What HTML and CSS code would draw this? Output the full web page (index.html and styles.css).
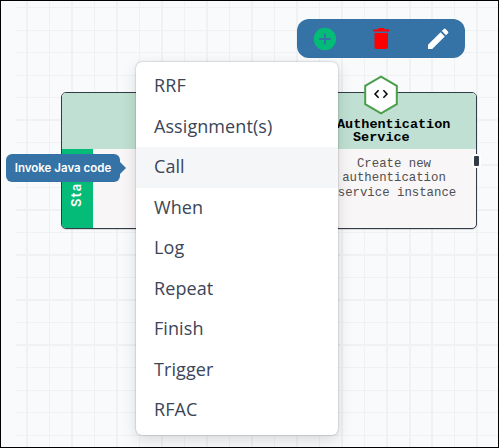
FILE: index.html
```html
<!DOCTYPE html>
<html lang="en">
<head>
<meta charset="utf-8">
<title>Flow editor</title>
<link rel="stylesheet" href="styles.css">
</head>
<body>
<main class="canvas">
  <div class="grid"></div>
  <section class="node">
    <header class="node-head"><h2><span class="wide">Authentication</span><span>Service</span></h2></header>
    <div class="node-body">
      <div class="start"><span>Start</span></div>
      <p>Create new<br>authentication<br><span class="last">service instance</span></p>
    </div>
    <svg class="hex" viewBox="0 0 36 40"><path d="M18 1.600 33.800 10.800V29.200L18 38.400 2.200 29.200V10.800Z" fill="#fff" stroke="#4b9e4a" stroke-width="2"/><path d="M15.600 15.200 12 19 15.600 22.800M20.400 15.200 24 19 20.400 22.800" fill="none" stroke="#000" stroke-width="1.500"/></svg>
    <i class="port"></i>
  </section>
  <div class="toolbar">
    <svg viewBox="0 0 24 24"><path fill="#04bb78" d="M12.900 .8a11.200 11.200 0 1 0 0 22.400 11.200 11.200 0 0 0 0-22.400Zm5.600 12.200h-4.600v4.600h-2v-4.600H7.300v-2h4.600V6.400h2v4.600h4.600Z"/></svg>
    <svg viewBox="0 0 24 24"><path fill="#f00" d="M5.500 6h13.500V20q0 2-2 2H7.500q-2 0-2-2ZM4.300 2.500h4.300l1.200-1.500h5l1.200 1.500h4.300v2H4.300Z"/></svg>
    <svg viewBox="0 0 24 24"><path fill="#fff" d="M2 17.800 14.600 5.200 18.800 9.400 6.200 22H2ZM22 6.200 20 8.200 15.800 4 17.800 2q.9-.9 1.800 0L22 4.400q.9.900 0 1.800Z"/></svg>
  </div>
  <ul class="menu">
    <li>RRF</li>
    <li>Assignment(s)</li>
    <li class="active">Call</li>
    <li>When</li>
    <li>Log</li>
    <li>Repeat</li>
    <li>Finish</li>
    <li>Trigger</li>
    <li>RFAC</li>
  </ul>
  <div class="tooltip">Invoke Java code</div>
</main>
</body>
</html>
```
FILE: styles.css
```css
* { box-sizing: border-box; }
body { margin: 0; }
.canvas {
  position: relative;
  width: 499px;
  height: 448px;
  overflow: hidden;
  border: 1px solid #000;
  background: #f9fafc;
  font-family: "Open Sans", sans-serif;
}
.grid {
  position: absolute;
  inset: 0 0 0 15px;
  background:
    repeating-linear-gradient(90deg, transparent 0 10.5px, #f0f1f2 10.5px 12px, transparent 12px 22.5px),
    repeating-linear-gradient(180deg, transparent 0 6px, #f0f1f2 6px 7.5px, transparent 7.5px 22.5px);
}
.node {
  position: absolute;
  left: 60px;
  top: 91px;
  width: 416px;
  height: 137px;
  border: 1px solid #333b47;
  border-radius: 5px;
  background: #f8f6f6;
  box-shadow: 0 1px 1px #0002;
  font-family: "Liberation Mono", monospace;
}
.node-head {
  height: 56px;
  padding-top: 25px;
  background: #bfe0d2;
  border-radius: 4px 4px 0 0;
}
.node-head h2 {
  margin: 0 0 0 275px;
  font-size: 13.500px;
  line-height: 13px;
}
.node-head h2 span { display: block; padding-left: 16px; }
.node-head h2 .wide { padding-left: 0; }
.node-body { display: flex; height: 79px; }
.start {
  flex: none;
  display: flex;
  align-items: center;
  justify-content: center;
  width: 31px;
  background: #04bb78;
  border-radius: 0 0 0 4px;
}
.start span {
  writing-mode: vertical-rl;
  transform: rotate(180deg);
  margin-right: 3px;
  color: #fff;
  font: 600 13px Inter, sans-serif;
  letter-spacing: 1.300px;
}
.node-body p {
  width: 125px;
  margin: 7.500px 0 0 238.500px;
  color: #505050;
  font-size: 12.350px;
  line-height: 14.500px;
  text-align: center;
  white-space: nowrap;
}
.last { padding-left: 6px; }
.hex {
  position: absolute;
  left: 301px;
  top: -18px;
  width: 36px;
  height: 40px;
}
.port {
  position: absolute;
  right: -5px;
  top: 61px;
  width: 9px;
  height: 14px;
  border: 2px solid #fff;
  border-radius: 3px;
  background: #333b47;
}
.toolbar {
  position: absolute;
  left: 296px;
  top: 18px;
  width: 168px;
  height: 39px;
  padding: 0 15px;
  display: flex;
  align-items: center;
  justify-content: space-between;
  border-radius: 12px;
  background: #3572a6;
}
.toolbar svg { width: 24px; height: 24px; overflow: visible; }
.menu {
  position: absolute;
  left: 135px;
  top: 61px;
  width: 202px;
  height: 373px;
  margin: 0;
  padding: 4px 0;
  list-style: none;
  border-radius: 6px;
  background: #fff;
  box-shadow: 0 0 2px #0005, 0 5px 16px #0002;
  color: #3b4557;
  font-size: 18px;
  letter-spacing: 0.080px;
}
.menu li {
  display: flex;
  align-items: center;
  height: 40.500px;
  padding: 0 0 2px 18px;
}
.menu .active { background: #f5f6f8; }
.tooltip {
  position: absolute;
  left: 5px;
  top: 153px;
  width: 114px;
  height: 28px;
  border-radius: 6px;
  background: #3572a6;
  color: #fff;
  font: 600 11.500px/28px Inter, sans-serif;
  text-align: center;
  white-space: nowrap;
}
.tooltip::after {
  content: "";
  position: absolute;
  left: 114px;
  top: 8px;
  border: 6px solid transparent;
  border-left-color: #3572a6;
  border-right: 0;
}
```
